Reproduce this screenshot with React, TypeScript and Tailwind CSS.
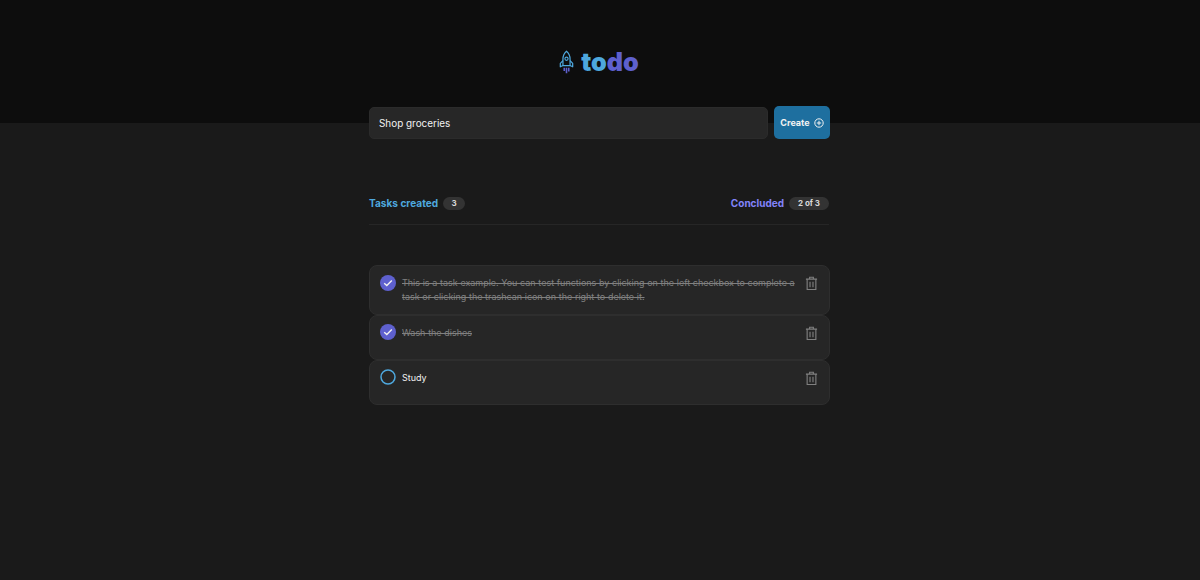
import React from "react";

function Rocket() {
  return (
    <svg width="15" height="24" viewBox="0 0 16 25" fill="none" className="shrink-0">
      <path d="M8 1C5.2 3.4 4.2 6.4 4.2 9.4v7h7.6v-7C11.8 6.4 10.8 3.4 8 1Z" stroke="#4ea8de" strokeWidth="1.3" strokeLinejoin="round" />
      <path d="M4.2 11 1.4 14v3.6l2.8-1.4M11.8 11l2.8 3v3.6l-2.8-1.4" stroke="#4ea8de" strokeWidth="1.3" strokeLinejoin="round" />
      <circle cx="8" cy="9" r="1.7" stroke="#4ea8de" strokeWidth="1.2" />
      <path d="M5.6 18.5v3.5M8 18.5v6M10.4 18.5v4" stroke="#5e60ce" strokeWidth="1.7" />
    </svg>
  );
}

function Trash() {
  return (
    <svg width="13" height="15" viewBox="0 0 14 16" fill="none" className="shrink-0">
      <path d="M1 3.3h12M5 3V1.3h4V3M2.3 3.3v11.2h9.4V3.3M5.4 6v6M8.6 6v6" stroke="#808080" strokeWidth="1.2" />
    </svg>
  );
}

function Check({ done }: { done: boolean }) {
  if (!done)
    return (
      <svg width="16" height="16" viewBox="0 0 16 16" fill="none" className="shrink-0">
        <circle cx="8" cy="8" r="7" stroke="#4ea8de" strokeWidth="1.5" />
      </svg>
    );
  return (
    <div className="flex h-[16px] w-[16px] shrink-0 items-center justify-center rounded-full bg-[#5e60ce]">
      <svg width="10" height="8" viewBox="0 0 10 8" fill="none">
        <path d="M1.2 4.2 3.8 6.6 8.8 1.4" stroke="#f2f2f2" strokeWidth="1.4" />
      </svg>
    </div>
  );
}

function Task({ text, done, box }: { text: string; done: boolean; box: string }) {
  return (
    <div className={`flex items-start rounded-lg border border-[#2e2e2e] bg-[#262626] pl-[9.5px] pr-[11px] ${box}`}>
      <Check done={done} />
      <p className={`ml-[6.5px] flex-1 pt-[1.5px] text-[8.96px] leading-[13.5px] [word-spacing:0.2px] ${done ? "text-[#808080] line-through" : "text-[#f2f2f2]"}`}>{text}</p>
      <div className="ml-[9px] mt-[1.5px]"><Trash /></div>
    </div>
  );
}

export default function App() {
  return (
    <div className="h-[580px] bg-[#1a1a1a] pr-px font-['Inter',sans-serif]">
      <header className="mr-[-1px] flex h-[123px] items-start justify-center bg-[#0d0d0d] pt-[50px]">
        <div className="mr-[2px] flex items-center gap-[7px]">
          <Rocket />
          <span className="text-[25.2px] font-black leading-[24px]">
            <span className="text-[#4ea8de]">to</span>
            <span className="text-[#5e60ce]">do</span>
          </span>
        </div>
      </header>
      <main className="mx-auto -mt-[17px] w-[461px]">
        <div className="flex items-stretch gap-[6px]">
          <div className="mt-px flex h-[32px] flex-1 items-center rounded-[5px] border border-[#2b2b2b] bg-[#272727] px-[9px] pt-[1px] text-[9.92px] text-[#f2f2f2]">
            Shop groceries
          </div>
          <button className="flex h-[33px] w-[56px] items-center justify-center gap-[4px] rounded-[5px] bg-[#1e6f9f] text-[9px] font-bold text-[#f2f2f2]">
            Create
            <svg width="10" height="10" viewBox="0 0 10 10" fill="none">
              <circle cx="5" cy="5" r="4.2" stroke="#f2f2f2" strokeWidth="1" />
              <path d="M5 2.8v4.4M2.8 5h4.4" stroke="#f2f2f2" strokeWidth="1" />
            </svg>
          </button>
        </div>
        <div className="mr-[1px] mt-[56px] flex h-[30px] items-center justify-between border-b border-[#262626] pb-[13px]">
          <div className="flex items-center gap-[5px]">
            <span className="text-[10.1px] font-bold leading-[14px] text-[#4ea8de]">Tasks created</span>
            <span className="flex h-[13px] w-[22px] items-center justify-center rounded-full bg-[#333333] text-[8px] font-bold text-[#d9d9d9]">3</span>
          </div>
          <div className="flex items-center gap-[5px]">
            <span className="text-[10px] font-bold leading-[14px] text-[#8284fa]">Concluded</span>
            <span className="flex h-[13px] w-[40px] items-center justify-center rounded-full bg-[#333333] text-[8px] font-bold text-[#d9d9d9]">2 of 3</span>
          </div>
        </div>
        <div className="mt-[40px] flex flex-col">
          <Task box="h-[50px] pt-[8.5px]" done text="This is a task example. You can test functions by clicking on the left checkbox to complete a task or clicking the trashcan icon on the right to delete it." />
          <Task box="h-[45px] pt-[8px]" done text="Wash the dishes" />
          <Task box="h-[45px] pt-[8px]" done={false} text="Study" />
        </div>
      </main>
    </div>
  );
}
